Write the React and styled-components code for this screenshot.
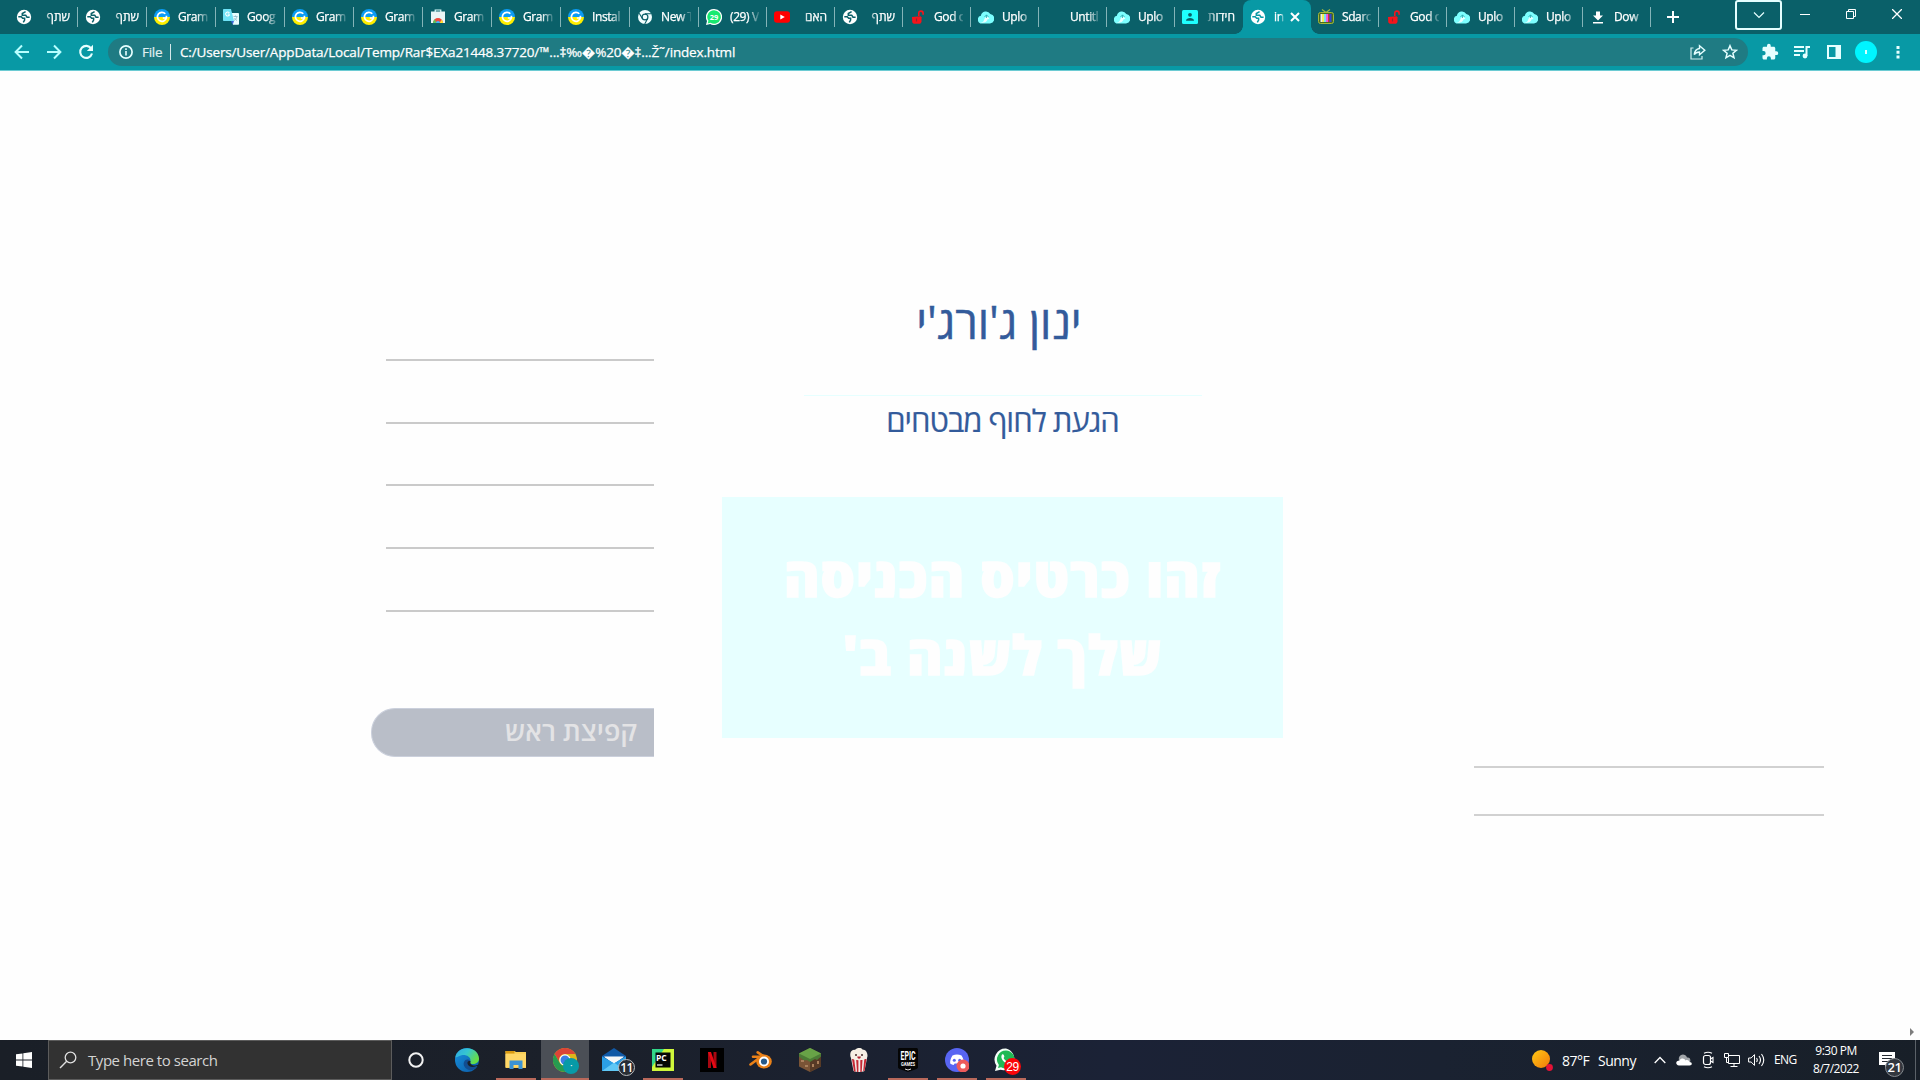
import React from "react";
import styled, { createGlobalStyle, css } from "styled-components";

const Global = createGlobalStyle`
  * { box-sizing: border-box; }
  html, body { margin: 0; padding: 0; background: #fefefe; overflow: hidden; }
  body { font-family: "Open Sans", "Noto Sans", "Liberation Sans", sans-serif; }
  svg { display: block; flex: none; }
`;

const Screen = styled.div`
  width: 1920px;
  height: 1080px;
  display: flex;
  flex-direction: column;
  overflow: hidden;
`;

/* ---------- tab strip ---------- */
const TabStrip = styled.div`
  height: 34px;
  flex: none;
  display: flex;
  background: #0a6069;
  padding-left: 9px;
`;
const Tab = styled.div`
  width: ${(p) => p.$w}px;
  height: 34px;
  flex: none;
  display: flex;
  align-items: center;
  padding-left: 7px;
  position: relative;
  color: #fff;
  ${(p) => p.$line && css`
    &::after {
      content: "";
      position: absolute;
      right: 0;
      top: 7px;
      width: 1px;
      height: 20px;
      background: #84b4b8;
    }
  `}
  ${(p) => p.$active && css`
    background: #0899a5;
    border-radius: 8px 8px 0 0;
    &::before, &::after {
      content: "";
      position: absolute;
      bottom: 0;
      width: 8px;
      height: 8px;
    }
    &::before { left: -8px; background: radial-gradient(circle at 0 0, transparent 7.5px, #0899a5 8px); }
    &::after { right: -8px; background: radial-gradient(circle at 100% 0, transparent 7.5px, #0899a5 8px); }
  `}
`;
const TabIcon = styled.span`
  width: 16px;
  height: 16px;
  margin-right: 8px;
  flex: none;
`;
const TabTitle = styled.span`
  width: ${(p) => p.$w}px;
  height: 18px;
  line-height: 17px;
  white-space: nowrap;
  font-size: 12px;
  letter-spacing: ${(p) => (p.$rtl ? "0" : "-0.4px")};
  -webkit-text-stroke: 0.25px #fff;
  direction: ${(p) => (p.$rtl ? "rtl" : "ltr")};
  mask-image: linear-gradient(${(p) => (p.$rtl ? "to left" : "to right")}, #000 62%, transparent 108%);
`;
const NewTab = styled.div`
  width: 43px;
  height: 34px;
  display: grid;
  place-items: center;
`;
const WindowControls = styled.div`
  margin-left: auto;
  display: flex;
  height: 30px;
`;
const ChevronBox = styled.div`
  width: 47px;
  height: 30px;
  border: 2px solid #e5ffff;
  border-radius: 3px;
  display: grid;
  place-items: center;
`;
const WinButton = styled.div`
  width: 46px;
  height: 28px;
  display: grid;
  place-items: center;
`;

/* ---------- toolbar ---------- */
const Toolbar = styled.div`
  height: 37px;
  flex: none;
  display: flex;
  align-items: center;
  background: #0899a5;
  border-bottom: 1px solid #6ccbd3;
  padding-left: 6px;
`;
const ToolButton = styled.div`
  width: 32px;
  height: 32px;
  display: grid;
  place-items: center;
`;
const Omnibox = styled.div`
  width: 1640px;
  height: 28px;
  border-radius: 14px;
  background: #1f7b83;
  margin: 0 6px;
  display: flex;
  align-items: center;
  color: #fff;
  padding-left: 11px;
`;
const FileLabel = styled.span`
  margin-left: 9px;
  width: 28px;
  font-size: 13.5px;
  line-height: 18px;
  letter-spacing: -0.3px;
  color: #e0f0f1;
  -webkit-text-stroke: 0.2px #e0f0f1;
`;
const OmniLine = styled.span`
  width: 1px;
  height: 16px;
  background: #d5e8ea;
`;
const Url = styled.span`
  margin-left: 9px;
  font-size: 13.5px;
  line-height: 18px;
  white-space: nowrap;
  letter-spacing: -0.16px;
  -webkit-text-stroke: 0.25px #fff;
`;
const OmniActions = styled.div`
  margin-left: auto;
  display: flex;
  padding-right: 2px;
`;
const Avatar = styled.div`
  width: 22px;
  height: 22px;
  border-radius: 50%;
  background: #00f5ff;
  display: grid;
  place-items: center;
  &::after { content: ""; width: 2px; height: 4px; background: #d9ffff; }
`;

/* ---------- page ---------- */
const Page = styled.main`
  height: 969px;
  flex: none;
  display: flex;
  background: #fefefe;
  padding-left: 371px;
  position: relative;
`;
const LeftColumn = styled.div`
  width: 283px;
  padding-top: 288px;
`;
const Rule = styled.div`
  height: 2px;
  margin: 0 0 ${(p) => p.$gap}px ${(p) => p.$indent || 0}px;
  background: ${(p) => p.$color || "#cacaca"};
`;
const Pill = styled.div`
  margin-top: 96px;
  height: 49px;
  border-radius: 24px 0 0 24px;
  background: #b9bec8;
  border: 1px solid #cbd0dc;
  border-right: 0;
  display: flex;
  justify-content: flex-end;
  align-items: center;
  padding: 0 17px 4px 0;
`;
const Fitted = styled.span`
  display: block;
  direction: rtl;
  white-space: nowrap;
  font-family: "Open Sans", "Liberation Sans", sans-serif;
  font-size: ${(p) => p.$size}px;
  line-height: ${(p) => p.$line}px;
  height: ${(p) => p.$line}px;
  letter-spacing: ${(p) => p.$spacing || 0}px;
  font-weight: ${(p) => p.$weight || 400};
  color: ${(p) => p.$color};
  -webkit-text-stroke: ${(p) => p.$stroke || 0}px ${(p) => p.$color};
`;
const CenterColumn = styled.div`
  width: 561px;
  margin-left: 68px;
  display: flex;
  flex-direction: column;
  align-items: center;
  padding-top: 221px;
`;
const NameLine = styled.div`
  width: 561px;
  display: flex;
  justify-content: center;
  padding-right: 7px;
`;
const Divider = styled.div`
  width: 398px;
  height: 1px;
  background: #e6ffff;
  margin-top: 43px;
`;
const Subtitle = styled.div`
  margin-top: 4px;
  height: 50px;
`;
const Ticket = styled.div`
  width: 561px;
  height: 241px;
  margin-top: 47px;
  background: #e7ffff;
  display: flex;
  flex-direction: column;
  align-items: center;
  padding-top: 40px;
`;
const RightColumn = styled.div`
  width: 350px;
  margin-left: 191px;
  padding-top: 695px;
`;
const ScrollArrow = styled.div`
  position: absolute;
  right: 6px;
  bottom: 4px;
  width: 0;
  height: 0;
  border-left: 4px solid #7d7d7d;
  border-top: 4px solid transparent;
  border-bottom: 4px solid transparent;
`;

/* ---------- taskbar ---------- */
const Taskbar = styled.div`
  height: 40px;
  flex: none;
  display: flex;
  color: #fff;
  background: linear-gradient(90deg, #1a1f27, #1b202a 30%, #1b2236 58%, #1a2231 75%, #181f28);
`;
const Start = styled.div`
  width: 48px;
  height: 40px;
  display: grid;
  place-items: center;
`;
const Search = styled.div`
  width: 344px;
  height: 40px;
  border: 1px solid #5c5c5c;
  background: #323232;
  display: flex;
  align-items: center;
  padding-left: 10px;
`;
const SearchText = styled.span`
  margin-left: 11px;
  padding-bottom: 1px;
  font-size: 15px;
  line-height: 20px;
  letter-spacing: -0.45px;
  color: #d4d4d4;
`;
const Task = styled.div`
  width: 48px;
  height: 40px;
  margin-right: ${(p) => p.$after ?? 1}px;
  display: grid;
  place-items: center;
  position: relative;
  background: ${(p) => (p.$active ? "#4b4f56" : "transparent")};
  ${(p) => p.$open && css`
    &::after {
      content: "";
      position: absolute;
      bottom: 0;
      left: ${p.$active ? 0 : 4}px;
      right: ${p.$active ? 0 : 4}px;
      height: 2px;
      background: #b9695b;
    }
  `}
`;
const Badge = styled.span`
  position: absolute;
  left: ${(p) => p.$x}px;
  top: ${(p) => p.$y}px;
  width: ${(p) => p.$s}px;
  height: ${(p) => p.$s}px;
  border-radius: 50%;
  background: ${(p) => p.$bg};
  border: ${(p) => p.$border || "0"};
  font-size: ${(p) => p.$fs || 11}px;
  font-weight: ${(p) => p.$fw || 600};
  font-family: ${(p) => p.$ff || '"Open Sans", sans-serif'};
  display: flex;
  align-items: center;
  justify-content: center;
  line-height: 1;
  letter-spacing: -0.5px;
`;
const Tray = styled.div`
  margin-left: auto;
  margin-right: 4px;
  display: flex;
  align-items: center;
  height: 40px;
`;
const Weather = styled.div`
  display: flex;
  align-items: center;
  font-size: 14px;
  line-height: 20px;
  padding-top: 1px;
  margin-right: 11px;
`;
const Temp = styled.span`
  width: 36px;
  margin-left: 9px;
  letter-spacing: -0.5px;
`;
const Sky = styled.span`
  width: 39px;
  letter-spacing: -0.5px;
`;
const TrayIcon = styled.div`
  width: 24px;
  height: 40px;
  display: grid;
  place-items: center;
`;
const Lang = styled.span`
  width: 36px;
  padding-left: 6px;
  padding-bottom: 1px;
  font-size: 12px;
  letter-spacing: -0.6px;
`;
const Clock = styled.div`
  width: 64px;
  text-align: center;
  font-size: 12px;
  line-height: 18px;
  letter-spacing: -0.5px;
`;
const Notify = styled.div`
  width: 48px;
  height: 40px;
  padding-right: 9px;
  position: relative;
  display: grid;
  place-items: center;
  border-right: 1px solid #5b6168;
`;

/* ---------- tab icons ---------- */
const Svg = ({ s = 16, w, h, v, children }) => (
  <svg width={w || s} height={h || s} viewBox={v || `0 0 ${w || s} ${h || s}`} fill="none">{children}</svg>
);
const Globe = ({ ink = "#0a6069" }) => (
  <Svg>
    <circle cx="8" cy="8" r="7.2" fill="#fff" />
    <path d="M9.600 2.600 6.300 4.500V6.200H9.700L11 8.200H13.600M2.300 7.700H5.200L6.700 9.300H8.600V11L7.300 13.300" stroke={ink} strokeWidth="1.500" />
  </Svg>
);
const Grammarly = () => (
  <Svg>
    <path d="M0 8a8 8 0 0 1 16 0Z" fill="#0b9cf5" />
    <path d="M0 8a8 8 0 0 0 16 0Z" fill="#ffee00" />
    <path d="M11.300 4.800A4.500 4.500 0 1 0 12.300 9H8.800M12.400 6.800V9.200" stroke="#fff" strokeWidth="1.700" />
  </Svg>
);
const Translate = () => (
  <Svg>
    <path d="M7 4h8.200a.8.8 0 0 1 .8.8V15a.8.8 0 0 1-.8.8H10Z" fill="#e8ffff" />
    <path d="M.8 0H8l3 12H.8A.8.8 0 0 1 0 11.200V.8A.8.8 0 0 1 .8 0Z" fill="#6fe3f7" />
    <path d="M8 12h3l-1.300 3.800Z" fill="#3867d6" />
    <path d="M6.400 5H4.600M6.400 4A2 2 0 1 0 6.600 5.500" stroke="#fff" strokeWidth="1.100" />
    <path d="M10.500 7.500h4M12.500 6.500v1M14 7.500c-.5 2-1.500 3-3 4M11.500 9c.6 1.300 1.500 2 2.500 2.500" stroke="#8bb6c8" strokeWidth=".8" />
  </Svg>
);
const Store = () => (
  <Svg>
    <path d="M1 2.500h14V14H1Z" fill="#e9f6f6" />
    <path d="M5.200 3V1h5.600v2" stroke="#dff" strokeWidth="1.200" />
    <path d="M3 14a5 5 0 0 1 10 0" fill="#ef4a3d" />
    <path d="M3 14a5 5 0 0 1 1.800-3.800L6.500 14Z" fill="#5ac75d" />
    <path d="M13 14a5 5 0 0 0-1.300-3.300L9.500 14Z" fill="#ffe232" />
    <path d="M6 14a2 2 0 0 1 4 0Z" fill="#3fb4ff" />
  </Svg>
);
const ChromeMono = () => (
  <Svg>
    <circle cx="8" cy="8" r="7" fill="#f2ffff" />
    <circle cx="8" cy="8" r="2.900" stroke="#0a6069" strokeWidth="1.200" />
    <path d="M8 4.800h6.300M5.300 9.500 2.200 4.300M10.700 9.600 7.700 15" stroke="#0a6069" strokeWidth="1.100" />
  </Svg>
);
const WaTab = () => (
  <Svg>
    <path d="M8 0a8 8 0 1 1-3.800 15L0 16l1-4A8 8 0 0 1 8 0Z" fill="#fff" />
    <path d="M8 1.200a6.800 6.800 0 1 1-3.500 12.600l-2.800.8.700-2.900A6.800 6.800 0 0 1 8 1.200Z" fill="#18ea70" />
    <text x="8" y="10.800" textAnchor="middle" fontSize="7.500" fontWeight="700" fontFamily="Open Sans" fill="#fff">29</text>
  </Svg>
);
const YouTube = () => (
  <Svg><rect y="2.300" width="16" height="11.500" rx="3" fill="#f00" /><path d="m6.300 5.500 4.500 2.500-4.500 2.500Z" fill="#fff" /></Svg>
);
const Unlock = () => (
  <Svg>
    <path d="M8.800 7V4c.2-2.600 4.400-2.600 4.300.4v1.400" stroke="#f5141b" strokeWidth="1.600" />
    <path d="m2 8 8.500-.8 1 1V13l-1.300 1.800H3.700L2.300 13.500Z" fill="#f5141b" />
    <path d="M6.500 9.500v3" stroke="#8b2a31" strokeWidth="1.200" />
  </Svg>
);
const Cloud = () => (
  <Svg>
    <path d="M3.900 14.500a3.900 3.900 0 0 1-1-7.700A5.100 5.100 0 0 1 12.300 5 4.800 4.800 0 0 1 12 14.500Z" fill="#7dffff" />
    <path d="M2 14c4 0 4-4 5-5l2-2 2.500 3-2 .2C9 13 6 14 2 14Z" fill="#e8ffff" />
    <path d="m6.500 8 2-2.200 2 2.200M8.500 6v3" stroke="#2aa9b0" strokeWidth=".8" />
  </Svg>
);
const Person = () => (
  <Svg>
    <rect y="1" width="16" height="14" rx="1.500" fill="#1fffff" />
    <circle cx="8" cy="5.800" r="1.900" fill="#0a6069" /><path d="M4 11.700c0-3.500 8-3.500 8 0Z" fill="#0a6069" />
  </Svg>
);
const Tv = () => (
  <Svg>
    <path d="m4 .5 4 3 4-3" stroke="#a4b83b" strokeWidth="1.200" />
    <rect x=".5" y="3.500" width="15" height="11" rx="2" fill="#476b20" stroke="#a4b83b" />
    <path d="M2.500 5H4v8H2.500Z" fill="#eee" /><path d="M4 5h2v8H4Z" fill="#f5ee55" /><path d="M6 5h2v8H6Z" fill="#7be0ef" />
    <path d="M8 5h2v8H8Z" fill="#e95ae6" /><path d="M10 5h1.500v8H10Z" fill="#e42a38" /><path d="M11.500 5h2v8h-2Z" fill="#3244d8" />
  </Svg>
);
const Download = () => (
  <Svg><path d="M6 2.500h4v4h3l-5 5-5-5h3ZM3 13h10v1.600H3Z" fill="#fff" /></Svg>
);

const icons = { globe: Globe, gram: Grammarly, trans: Translate, store: Store, chrome: ChromeMono, wa: WaTab, yt: YouTube, unlock: Unlock, cloud: Cloud, person: Person, tv: Tv, down: Download };
const tabs = [
  ["globe", "שתף", 1], ["globe", "שתף", 1], ["gram", "Gram"], ["trans", "Goog"], ["gram", "Gram"],
  ["gram", "Gram"], ["store", "Gram"], ["gram", "Gram"], ["gram", "Instal"], ["chrome", "New T"],
  ["wa", "(29) V"], ["yt", "האם", 1], ["globe", "שתף", 1], ["unlock", "God o"], ["cloud", "Uplo"],
  [null, "Untitl"], ["cloud", "Uplo"], ["person", "חידות", 1], ["globe", "in", 0, 1], ["tv", "Sdarc"],
  ["unlock", "God o"], ["cloud", "Uplo"], ["cloud", "Uplo"], ["down", "Dow"],
];

const Line = ({ d, s = 20, sw = 2, c = "#e6ffff" }) => (
  <Svg s={s}><path d={d} stroke={c} strokeWidth={sw} /></Svg>
);

function TabBar() {
  return (
    <TabStrip>
      {tabs.map(([icon, title, rtl, active], i) => {
        const Icon = icon && icons[icon];
        const w = i < 10 ? 69 : 68;
        return (
          <Tab key={i} $w={w} $active={active} $line={!active && i !== 17}>
            <TabIcon>{Icon && <Icon ink={active ? "#0899a5" : undefined} />}</TabIcon>
            <TabTitle $rtl={rtl} $w={active ? 10 : w - 39}>{title}</TabTitle>
            {active && <Svg w={22} h={16}><path d="m7 4 8 8M15 4l-8 8" stroke="#fff" strokeWidth="2" /></Svg>}
          </Tab>
        );
      })}
      <NewTab><Svg s={14}><path d="M7 1v12M1 7h12" stroke="#fff" strokeWidth="2" /></Svg></NewTab>
      <WindowControls>
        <ChevronBox><Svg w={12} h={8}><path d="m1 1.500 5 5 5-5" stroke="#e6ffff" strokeWidth="1.200" /></Svg></ChevronBox>
        <WinButton><Svg w={10} h={10}><path d="M0 5.500h10" stroke="#fff" /></Svg></WinButton>
        <WinButton><Svg w={10} h={10}><path d="M.5 2.500h7v7h-7ZM2.500 2.500v-2h7v7h-2" stroke="#fff" /></Svg></WinButton>
        <WinButton><Svg w={10} h={10}><path d="m0 0 10 10M10 0 0 10" stroke="#fff" strokeWidth="1.300" /></Svg></WinButton>
      </WindowControls>
    </TabStrip>
  );
}

function AddressBar() {
  return (
    <Toolbar>
      <ToolButton><Line s={16} d="M15 8H2M8 1.500 1.600 8 8 14.500" c="#b8ffff" /></ToolButton>
      <ToolButton><Line s={16} d="M1 8h13M8 1.500 14.400 8 8 14.500" c="#b8ffff" /></ToolButton>
      <ToolButton><Svg s={16}><path d="M13.200 4.500A6 6 0 1 0 14 9.500" stroke="#e6ffff" strokeWidth="2.100" /><path d="M15 .8V7H8.800Z" fill="#e6ffff" /></Svg></ToolButton>
      <Omnibox>
        <Svg s={14}><circle cx="7" cy="7" r="6.100" stroke="#e6ffff" strokeWidth="1.700" /><path d="M7 6v4.500M7 3.300v1.600" stroke="#e6ffff" strokeWidth="1.600" /></Svg>
        <FileLabel>File</FileLabel>
        <OmniLine />
        <Url>C:/Users/User/AppData/Local/Temp/Rar$EXa21448.37720/™...‡‰�%20�‡...Ž˜/index.html</Url>
        <OmniActions>
          <ToolButton><Svg s={16}><path d="M3.500 4H1v11h11v-3" stroke="#cfeeee" strokeWidth="1.200" /><path d="M9.500 1.800v2.700C6 5 4.600 7.500 4.200 10.700c1.300-2 2.800-2.600 5.300-2.700v2.700L14.800 6.200Z" stroke="#e6ffff" strokeWidth="1.400" /></Svg></ToolButton>
          <ToolButton><Svg s={16}><path d="m8 1.700 1.800 4.200 4.600.4-3.500 3 1.100 4.500L8 11.400l-4 2.400 1.100-4.500-3.500-3 4.600-.4Z" stroke="#e6ffff" strokeWidth="1.500" /></Svg></ToolButton>
        </OmniActions>
      </Omnibox>
      <ToolButton><Svg s={18} v="0 0 24 24"><path d="M20.500 11H19V7c0-1.100-.9-2-2-2h-4V3.500a2.500 2.500 0 0 0-5 0V5H4c-1.100 0-2 .9-2 2v3.800h1.500a2.700 2.700 0 0 1 0 5.400H2V20c0 1.100.9 2 2 2h3.800v-1.500a2.700 2.700 0 0 1 5.400 0V22H17c1.100 0 2-.9 2-2v-4h1.500a2.500 2.500 0 0 0 0-5Z" fill="#e6ffff" /></Svg></ToolButton>
      <ToolButton><Svg s={18}><path d="M1 4h10M1 8h10M1 12h6M13.500 13V4H17" stroke="#e6ffff" strokeWidth="2" /><circle cx="12" cy="13" r="2.400" fill="#e6ffff" /></Svg></ToolButton>
      <ToolButton><Svg s={14}><path d="M1 1h12v12H1Z" stroke="#e6ffff" strokeWidth="2" /><path d="M8.500 1H13v12H8.500Z" fill="#e6ffff" /></Svg></ToolButton>
      <ToolButton><Avatar /></ToolButton>
      <ToolButton><Svg w={4} h={14}><path d="M.5 1h3v3h-3ZM.5 5.700h3v3h-3ZM.5 10.500h3v3h-3Z" fill="#e6ffff" /></Svg></ToolButton>
    </Toolbar>
  );
}

function Content() {
  const gaps = [61, 60, 61, 61, 0];
  return (
    <Page>
      <LeftColumn>
        {gaps.map((g, i) => <Rule key={i} $gap={g} $indent={15} />)}
        <Pill><Fitted $size={27} $line={40} $weight={600} $color="#e3e3e5">קפיצת ראש</Fitted></Pill>
      </LeftColumn>
      <CenterColumn>
        <NameLine><Fitted $size={45} $line={60} $stroke={0.5} $color="#335b9b">ינון ג'ורג'י</Fitted></NameLine>
        <Divider />
        <Subtitle><Fitted $size={31} $line={40} $spacing={-1} $stroke={0.2} $color="#335b9b">הגעת לחוף מבטחים</Fitted></Subtitle>
        <Ticket>
          <Fitted $size={54} $line={78} $weight={800} $spacing={1} $stroke={1.5} $color="#fefefe">זהו כרטיס הכניסה</Fitted>
          <Fitted $size={54} $line={78} $weight={800} $spacing={1} $stroke={1.5} $color="#fefefe">שלך לשנה ב'</Fitted>
        </Ticket>
      </CenterColumn>
      <RightColumn>
        <Rule $gap={46} $color="#d1d1d1" />
        <Rule $gap={0} $color="#d1d1d1" />
      </RightColumn>
      <ScrollArrow />
    </Page>
  );
}

function Dock() {
  return (
    <Taskbar>
      <Start><Svg s={16}><path d="M0 2.300 6.500 1.400V7.600H0ZM7.300 1.300 16 0v7.600H7.300ZM0 8.400h6.500v6.200L0 13.700ZM7.300 8.400H16V16l-8.700-1.200Z" fill="#fff" /></Svg></Start>
      <Search>
        <Svg s={18}><circle cx="11.500" cy="6.500" r="5.300" stroke="#e0e0e0" strokeWidth="1.300" /><path d="M7.700 10.300 1 17" stroke="#e0e0e0" strokeWidth="1.400" /></Svg>
        <SearchText>Type here to search</SearchText>
      </Search>
      <Task $after={3}><Svg s={16}><circle cx="8" cy="8" r="6.700" stroke="#f2f2f2" strokeWidth="2" /></Svg></Task>
      <Task>
        <Svg s={24}>
          <defs>
            <linearGradient id="e1" x1="0" y1="0" x2="1" y2=".5"><stop stopColor="#2ea6e6" /><stop offset=".5" stopColor="#36c6d0" /><stop offset="1" stopColor="#66dd46" /></linearGradient>
            <linearGradient id="e2" x1="0" y1="0" x2="1" y2="1"><stop stopColor="#1793e0" /><stop offset="1" stopColor="#0c59a4" /></linearGradient>
          </defs>
          <circle cx="12" cy="12" r="12" fill="url(#e2)" />
          <path d="M.3 9.500C2-3 23-3 24 10.500c.2 4.500-4 6-7 5.500-3-.4-2.500-1.500-1.700-2.700C16.500 9 11 6 6.500 7.200 3 8 1 10 .3 9.500Z" fill="url(#e1)" />
          <path d="M15.500 13.300C14 10.500 9.500 11 8.700 15c-.6 4 3.800 8 8.500 7 2.500-.7 4.500-2.700 5.500-4.500-4 2.200-8.700 0-7.200-4.200Z" fill="#124d91" />
          <path d="M15.500 13.300c-1 2.700 1.500 4.400 4.700 4.200 1.500-.1 3-1 3-1l.5 2-2-.5c-5 2-8.500.5-9.200-2.500-.4-1.700 1-3.200 3-2.200Z" fill="#1a2029" />
        </Svg>
      </Task>
      <Task $open>
        <Svg s={24}><path d="M1.500 3h9l1.500 1H22v16H1.500Z" fill="#f9cf58" /><path d="M1.500 3h9v2.500h-9Z" fill="#d99a12" /><path d="M1.500 6H22v13H1.500Z" fill="#ffd767" /><path d="M5.500 12.500h13V21h-4v-4h-5v4h-4Z" fill="#3a93d5" /></Svg>
      </Task>
      <Task $open $active>
        <Svg s={24}>
          <circle cx="12" cy="12" r="12" fill="#ddb51b" />
          <path d="M1.600 6A12 12 0 0 1 22.400 6H12a6 6 0 0 0-5.200 9Z" fill="#dc4437" />
          <path d="M1.600 6 6.800 15a6 6 0 0 0 7.300 2.600L12 24A12 12 0 0 1 1.600 6Z" fill="#279b50" />
          <circle cx="12" cy="12" r="5.700" fill="#fff" /><circle cx="12" cy="12" r="4.500" fill="#3d7de4" />
        </Svg>
        <Badge $x={22} $y={18} $s={16} $bg="#079aa7" $fs={8}>·</Badge>
      </Task>
      <Task>
        <Svg s={24}><path d="m0 8 12-8 12 8v3L12 16 0 11Z" fill="#1159a6" /><path d="M2 8.500h20L12 16Z" fill="#fff" /><path d="M0 8.500 12 15l12-6.500V23H0Z" fill="#2b9fe6" /><path d="m0 23 12-8.500L24 23Z" fill="#60c7f5" /><path d="M2.500 9h19L12 15Z" fill="#f7f7f7" /></Svg>
        <Badge $x={28} $y={19} $s={17} $bg="#282d34" $border="1px solid #b9bbbe" $fs={12}>11</Badge>
      </Task>
      <Task $open>
        <Svg s={22}><rect width="22" height="22" fill="#cff73b" /><path d="M0 0h12L0 18Z" fill="#31d789" /><rect x="3.500" y="3.500" width="15" height="15" fill="#050505" /><text x="4" y="12" fontSize="8.500" fontWeight="700" fontFamily="Open Sans" fill="#fff">PC</text><path d="M5 16h5.500" stroke="#fff" strokeWidth="1.200" /></Svg>
      </Task>
      <Task><Svg s={24}><path d="M0 0h24v24H0Z" fill="#000" /><path d="M8 4h3v16H8ZM13.500 4h3v16h-3Z" fill="#a80710" /><path d="M8 4h3l5.500 16h-3Z" fill="#e50914" /></Svg></Task>
      <Task>
        <Svg s={24}><path d="M1.500 16.500 12 8.700H4M8.700 4.300l9 6" stroke="#ea8118" strokeWidth="2.600" strokeLinecap="round" strokeLinejoin="round" /><ellipse cx="15" cy="13.500" rx="7.800" ry="7" fill="#ea8118" /><circle cx="15" cy="13.500" r="5" fill="#fff" /><circle cx="15" cy="13.500" r="3.100" fill="#265a8a" /></Svg>
      </Task>
      <Task>
        <Svg s={24}><path d="m12 0 11 5.500v13L12 24 1 18.500v-13Z" fill="#7a5436" /><path d="M12 11 23 5.500v13L12 24Z" fill="#573a26" /><path d="m12 0 11 5.500v3L19 12l-2-1-5 3-3-2-3 .5-5-4v-3Z" fill="#4c7b36" /><path d="m12 0 11 5.500L12 11 1 5.500Z" fill="#68a347" /><path d="M3 12h3v2H3ZM7 17h3v2H7ZM14 16h2v3h-2ZM19 13h2v3h-2Z" fill="#a9805c" /></Svg>
      </Task>
      <Task>
        <Svg s={24}><path d="m4 10 2.500 13c3 1.300 8 1.300 11 0L20 10Z" fill="#f2ece8" /><path d="M5 11h2.200l1.500 12.500H7ZM9.200 12h2.200v12H10ZM13.300 12h2.200L14.700 24h-1.400ZM17.300 11h2.200L17.500 23h-1.300Z" fill="#c62935" /><path d="M4 10C2 6 4 1 8 2c2-2.500 6-2.500 7.500-.5 4 0 6 5 4.500 8.500-4 3-12 3-16 0Z" fill="#f6efe4" /><circle cx="9" cy="7" r="1" fill="#44282a" /><circle cx="15" cy="7" r="1" fill="#44282a" /><path d="M10.300 8.500h3.500c0 3-3.500 3-3.500 0Z" fill="#b12031" /></Svg>
      </Task>
      <Task $open>
        <Svg s={24}><path d="M4 0h16c1.500 0 2 .6 2 2v17c0 1-.5 1.500-1.500 2L12 24l-8.500-3C2.500 20.500 2 20 2 19V2C2 .6 2.500 0 4 0Z" fill="#050505" /><text x="12" y="12" textAnchor="middle" textLength="15" lengthAdjust="spacingAndGlyphs" fontSize="12" fontWeight="700" fontFamily="Roboto" fill="#fff">EPIC</text><text x="12" y="17.800" textAnchor="middle" textLength="14" lengthAdjust="spacingAndGlyphs" fontSize="4.500" fontWeight="700" fontFamily="Roboto" fill="#fff">GAMES</text><path d="m9 21 3 1 3-1" stroke="#ddd" /></Svg>
      </Task>
      <Task $open>
        <Svg s={24}><circle cx="12" cy="12" r="12" fill="#5865f2" /><path d="M7.500 7.500c3-1.300 6-1.300 9 0 1.700 2.500 2.600 5.500 2.300 8-1 .9-2.300 1.400-3.500 1.600l-.9-1.500h-4.800l-.9 1.500c-1.200-.2-2.500-.7-3.500-1.600-.3-2.500.6-5.500 2.300-8Z" fill="#fff" /><circle cx="9.300" cy="12.300" r="1.500" fill="#5865f2" /><circle cx="14.700" cy="12.300" r="1.500" fill="#5865f2" /><circle cx="18" cy="18" r="6.500" fill="#ed5a5a" /><circle cx="18" cy="18" r="2.600" fill="#fff" /></Svg>
      </Task>
      <Task $open>
        <Svg s={24}><path d="M12 .5A11 11 0 1 1 6.500 21.800L1 23l1.500-5.300A11 11 0 0 1 12 .5Z" fill="#f5fff8" /><path d="M12 2.500a9 9 0 1 1-5 16.700l-3 .8.900-3A9 9 0 0 1 12 2.500Z" fill="#20b954" /><path d="M8 6.500c1-.7 2 0 2.300 2 .2 1-.9 1-.6 1.700.8 1.600 2 2.500 3.500 3 .7.200 1-1.200 1.800-.9 2 .8 2.200 1.200 1.500 2.500C13 18 5 11 8 6.500Z" fill="#fff" /></Svg>
        <Badge $x={22} $y={18} $s={17} $bg="#fb0509" $fs={12} $fw={400} $ff={'"Liberation Sans", sans-serif'}>29</Badge>
      </Task>
      <Tray>
        <Weather>
          <Svg w={21} h={21}><defs><linearGradient id="sun" x1="0" y1="0" x2="1" y2="1"><stop stopColor="#ffc914" /><stop offset="1" stopColor="#f0790a" /></linearGradient></defs><circle cx="9" cy="9" r="9" fill="url(#sun)" /><circle cx="17.500" cy="17.500" r="3.400" fill="#e51236" /></Svg>
          <Temp>87°F</Temp><Sky>Sunny</Sky>
        </Weather>
        <TrayIcon><Svg w={12} h={8}><path d="m.7 7 5.300-5.500L11.300 7" stroke="#fff" strokeWidth="1.300" /></Svg></TrayIcon>
        <TrayIcon><Svg w={16} h={12}><path d="M3 6a4 4 0 0 1 8-2.500c3-.5 4 2 3 4.500L6 9Z" fill="#a2a6aa" /><path d="M3 11.500c-4-.5-3.500-5 .5-5 1.500-2.800 5-2.500 6 0 2-1 3.500 0 4 1.500 3 0 3 3.500 0 3.500Z" fill="#fff" /></Svg></TrayIcon>
        <TrayIcon><Svg w={14} h={18}><rect x="2.500" y="4.500" width="7" height="9" rx="2" stroke="#fff" strokeWidth="1.200" /><path d="M9.500 8 12 6.500v5L9.500 10M3 2.300Q7 .3 11 2.300M3 15.700q4 2 8 0" stroke="#fff" strokeWidth="1.100" /></Svg></TrayIcon>
        <TrayIcon><Svg w={16} h={16}><path d="M5 3.500h10.500v8H4.500V6M10 11.500v3M6.500 14.500h7M.5 1.500h4v4h-4ZM2.500 5.500v5h2" stroke="#fff" /></Svg></TrayIcon>
        <TrayIcon><Svg w={17} h={14}><path d="M.6 5h2.500L6.500 1.600v10.800L3.100 9H.6Z" stroke="#fff" /><path d="M8.500 5q1.500 2 0 4M11 3q3 4 0 8M13.500 1q4.500 6 0 12" stroke="#fff" strokeWidth="1.100" /></Svg></TrayIcon>
        <Lang>ENG</Lang>
        <Clock>9:30 PM<br />8/7/2022</Clock>
        <Notify>
          <Svg w={16} h={16}><path d="M0 0h16v13H9l-3 3v-3H0Z" fill="#fff" /><path d="M3 3.500h10M3 6.500h10M3 9.500h6" stroke="#252b33" /></Svg>
          <Badge $x={17} $y={18} $s={19} $bg="#32373e" $border="1px solid #85898e" $fs={13}>21</Badge>
        </Notify>
      </Tray>
    </Taskbar>
  );
}

export default function App() {
  return (
    <Screen>
      <Global />
      <TabBar />
      <AddressBar />
      <Content />
      <Dock />
    </Screen>
  );
}
